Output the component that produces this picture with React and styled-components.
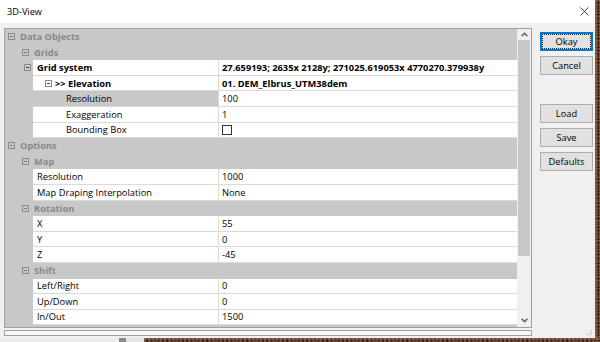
import React from 'react';
import styled, { createGlobalStyle, css } from 'styled-components';

const FONT = `"Open Sans", "Noto Sans", "DejaVu Sans", sans-serif`;

const desktopTexture = css`
  background-color: #5a3b29;
  background-image:
    radial-gradient(circle at 30% 40%, rgba(150, 110, 80, 0.7) 0 1px, transparent 1.6px),
    radial-gradient(circle at 70% 70%, rgba(35, 20, 12, 0.75) 0 1px, transparent 1.6px),
    radial-gradient(circle at 50% 20%, rgba(120, 85, 60, 0.6) 0 1px, transparent 1.5px);
  background-size: 4px 3px, 5px 4px, 3px 5px;
`;

const GlobalStyle = createGlobalStyle`
  html, body { margin: 0; padding: 0; }
  body { font-family: ${FONT}; background: #5a3b29; }
  #root { width: 600px; height: 342px; overflow: hidden; }
`;

const Screen = styled.div`
  width: 600px;
  height: 342px;
  display: flex;
  flex-direction: column;
`;

const TopRow = styled.div`
  display: flex;
  height: 338px;
`;

const DesktopEdge = styled.div`
  flex: 1;
  ${desktopTexture}
`;

const BottomStrip = styled.div`
  flex: 1;
  display: flex;
`;

const StripSegment = styled.div`
  width: ${(p) => p.$w}px;
  background: ${(p) => p.$bg};
`;

const StripDesktop = styled.div`
  flex: 1;
  ${desktopTexture}
`;

const Window = styled.div`
  width: 595px;
  display: flex;
  flex-direction: column;
  background: #f0f0f0;
  font-size: 9.3px;
  color: #000;
`;

const TitleBar = styled.div`
  height: 23px;
  flex: none;
  background: #fff;
  display: flex;
  align-items: center;
  justify-content: space-between;
  padding: 0 6px 0 7px;
`;

const Title = styled.span`
  font-size: 9.2px;
  color: #000;
`;

const Body = styled.div`
  flex: 1;
  display: flex;
  gap: 8px;
  padding: 5px 2px 3px 4px;
`;

const LeftColumn = styled.div`
  width: 528px;
  display: flex;
  flex-direction: column;
`;

const GridFrame = styled.div`
  height: 300px;
  box-sizing: border-box;
  border: 1px solid #a0a0a0;
  display: flex;
`;

const Rows = styled.div`
  width: 512px;
  background: #c8c8c8;
  display: flex;
  flex-direction: column;
  overflow: hidden;
`;

const ROW_H = '15.6px';

const CategoryRow = styled.div`
  height: ${ROW_H};
  flex: none;
  display: flex;
  align-items: center;
  gap: 5px;
  padding-left: ${(p) => (p.$level === 0 ? 3 : 17)}px;
  background: #c8c8c8;
  color: #888;
  font-weight: 700;
  white-space: nowrap;
`;

const PropRow = styled.div`
  height: ${ROW_H};
  flex: none;
  display: grid;
  grid-template-columns: 28px 185px 299px;
`;

const Gutter = styled.div`
  display: flex;
  align-items: center;
  justify-content: flex-end;
  padding-right: 2px;
  background: #c8c8c8;
`;

const NameCell = styled.div`
  box-sizing: border-box;
  display: flex;
  align-items: center;
  gap: 3px;
  padding-left: ${(p) => p.$indent}px;
  background: ${(p) => (p.$selected ? '#c8c8c8' : '#fff')};
  border-bottom: 1px solid #dadada;
  font-weight: ${(p) => (p.$bold ? 700 : 400)};
  white-space: nowrap;
  overflow: hidden;
`;

const ValueCell = styled.div`
  box-sizing: border-box;
  display: flex;
  align-items: center;
  padding-left: 3px;
  background: #fff;
  border-left: 1px solid #dadada;
  border-bottom: 1px solid #dadada;
  font-weight: ${(p) => (p.$bold ? 700 : 400)};
  white-space: nowrap;
  overflow: hidden;
`;

const Expander = styled.span`
  flex: none;
  width: 7px;
  height: 7px;
  box-sizing: border-box;
  border: 1px solid ${(p) => (p.$light ? '#8c8c8c' : '#8a8a8a')};
  display: flex;
  align-items: center;
  justify-content: center;
  &::after {
    content: '';
    width: 3px;
    height: 1px;
    background: ${(p) => (p.$light ? '#7a7a7a' : '#444')};
  }
`;

const Checkbox = styled.span`
  width: 10px;
  height: 10px;
  box-sizing: border-box;
  border: 1px solid #333;
  background: #fff;
`;

const Scrollbar = styled.div`
  width: 14px;
  background: #f0f0f0;
  display: flex;
  flex-direction: column;
`;

const ScrollButton = styled.div`
  height: ${(p) => p.$h}px;
  flex: none;
  display: flex;
  align-items: center;
  justify-content: center;
`;

const Track = styled.div`
  flex: 1;
  display: flex;
  flex-direction: column;
  padding: 0 1px;
`;

const Thumb = styled.div`
  height: 216px;
  background: #c8c8c8;
`;

const HScroll = styled.div`
  margin-top: 2px;
  height: 6px;
  box-sizing: border-box;
  border: 1px solid #a0a0a0;
  background: #f7f7f7;
`;

const ButtonColumn = styled.div`
  width: 53px;
  display: flex;
  flex-direction: column;
  padding-top: 4px;
  gap: 5px;
`;

const Button = styled.button`
  height: 19px;
  width: 53px;
  box-sizing: border-box;
  padding: 0;
  margin: 0;
  font-family: ${FONT};
  font-size: 9.3px;
  color: #000;
  background: #e1e1e1;
  border: 1px solid ${(p) => (p.$default ? '#0078d7' : '#adadad')};
  ${(p) =>
    p.$default &&
    css`
      box-shadow: inset 0 0 0 1px #0078d7;
      outline: 1px dotted #222;
      outline-offset: -3px;
    `}
  margin-top: ${(p) => p.$gapBefore || 0}px;
`;

const Grip = styled.svg`
  margin-top: auto;
  align-self: flex-end;
`;

const Chevron = ({ dir }) => (
  <svg width="7" height="5" viewBox="0 0 7 5">
    <path
      d={dir === 'up' ? 'M0.6 4.2 L3.5 1.2 L6.4 4.2' : 'M0.6 0.8 L3.5 3.8 L6.4 0.8'}
      fill="none"
      stroke="#5a5a5a"
      strokeWidth="1.3"
    />
  </svg>
);

const CloseIcon = () => (
  <svg width="9" height="9" viewBox="0 0 9 9">
    <path d="M0.5 0.5 L8.5 8.5 M8.5 0.5 L0.5 8.5" stroke="#333" strokeWidth="0.9" />
  </svg>
);

const rows = [
  { kind: 'cat', level: 0, label: 'Data Objects' },
  { kind: 'cat', level: 1, label: 'Grids' },
  {
    kind: 'prop',
    gutterExpander: true,
    bold: true,
    indent: 4,
    name: 'Grid system',
    value: '27.659193; 2635x 2128y; 271025.619053x 4770270.379938y',
  },
  { kind: 'prop', inlineExpander: true, bold: true, indent: 12, name: '>> Elevation', value: '01. DEM_Elbrus_UTM38dem' },
  { kind: 'prop', indent: 33, name: 'Resolution', value: '100', selected: true },
  { kind: 'prop', indent: 33, name: 'Exaggeration', value: '1' },
  { kind: 'prop', indent: 33, name: 'Bounding Box', checkbox: true },
  { kind: 'cat', level: 0, label: 'Options' },
  { kind: 'cat', level: 1, label: 'Map' },
  { kind: 'prop', indent: 4, name: 'Resolution', value: '1000' },
  { kind: 'prop', indent: 4, name: 'Map Draping Interpolation', value: 'None' },
  { kind: 'cat', level: 1, label: 'Rotation' },
  { kind: 'prop', indent: 4, name: 'X', value: '55' },
  { kind: 'prop', indent: 4, name: 'Y', value: '0' },
  { kind: 'prop', indent: 4, name: 'Z', value: '-45' },
  { kind: 'cat', level: 1, label: 'Shift' },
  { kind: 'prop', indent: 4, name: 'Left/Right', value: '0' },
  { kind: 'prop', indent: 4, name: 'Up/Down', value: '0' },
  { kind: 'prop', indent: 4, name: 'In/Out', value: '1500' },
];

export default function App() {
  return (
    <>
      <GlobalStyle />
      <Screen>
        <TopRow>
          <Window>
            <TitleBar>
              <Title>3D-View</Title>
              <CloseIcon />
            </TitleBar>
            <Body>
              <LeftColumn>
                <GridFrame>
                  <Rows>
                    {rows.map((r, i) =>
                      r.kind === 'cat' ? (
                        <CategoryRow key={i} $level={r.level}>
                          <Expander $light />
                          {r.label}
                        </CategoryRow>
                      ) : (
                        <PropRow key={i}>
                          <Gutter>{r.gutterExpander && <Expander />}</Gutter>
                          <NameCell $indent={r.indent} $bold={r.bold} $selected={r.selected}>
                            {r.inlineExpander && <Expander />}
                            {r.name}
                          </NameCell>
                          <ValueCell $bold={r.bold}>{r.checkbox ? <Checkbox /> : r.value}</ValueCell>
                        </PropRow>
                      )
                    )}
                  </Rows>
                  <Scrollbar>
                    <ScrollButton $h={11}>
                      <Chevron dir="up" />
                    </ScrollButton>
                    <Track>
                      <Thumb />
                    </Track>
                    <ScrollButton $h={13}>
                      <Chevron dir="down" />
                    </ScrollButton>
                  </Scrollbar>
                </GridFrame>
                <HScroll />
              </LeftColumn>
              <ButtonColumn>
                <Button $default>Okay</Button>
                <Button>Cancel</Button>
                <Button $gapBefore={24}>Load</Button>
                <Button>Save</Button>
                <Button>Defaults</Button>
                <Grip width="6" height="6" viewBox="0 0 6 6">
                  <rect x="4" y="0" width="1" height="1" fill="#b0b0b0" />
                  <rect x="4" y="2" width="1" height="1" fill="#b0b0b0" />
                  <rect x="2" y="2" width="1" height="1" fill="#b0b0b0" />
                  <rect x="4" y="4" width="1" height="1" fill="#b0b0b0" />
                  <rect x="2" y="4" width="1" height="1" fill="#b0b0b0" />
                  <rect x="0" y="4" width="1" height="1" fill="#b0b0b0" />
                </Grip>
              </ButtonColumn>
            </Body>
          </Window>
          <DesktopEdge />
        </TopRow>
        <BottomStrip>
          <StripSegment $w={119} $bg="#ececec" />
          <StripSegment $w={7} $bg="#8a8a8a" />
          <StripSegment $w={18} $bg="#e4e4e4" />
          <StripDesktop />
        </BottomStrip>
      </Screen>
    </>
  );
}
